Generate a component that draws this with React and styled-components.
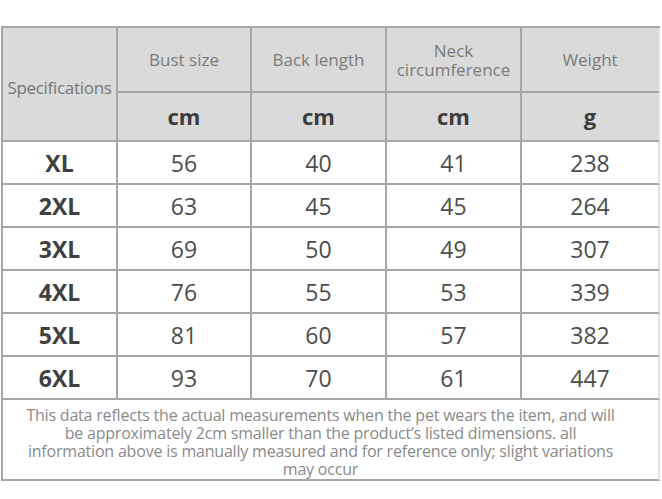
import React from "react";
import styled, { createGlobalStyle } from "styled-components";

const GlobalStyle = createGlobalStyle`
  html, body {
    margin: 0;
    padding: 0;
    background: #ffffff;
  }
  body {
    font-family: "Open Sans", "Noto Sans", sans-serif;
  }
`;

const Page = styled.div`
  width: 662px;
  height: 499px;
  padding-top: 26px;
  box-sizing: border-box;
  overflow: hidden;
`;

const Chart = styled.div`
  margin-left: 1px;
  width: 659px;
  box-sizing: border-box;
  display: grid;
  grid-template-columns: 115px 134px 135px 135px 138px;
  grid-template-rows: 65px 49px repeat(6, 43px) 81px;
  border-top: 2px solid #a6a6a6;
  border-left: 2px solid #a6a6a6;
`;

const Cell = styled.div`
  box-sizing: border-box;
  display: flex;
  align-items: center;
  justify-content: center;
  text-align: center;
  border-right: 2px solid ${({ $last }) => ($last ? "#e2e2e2" : "#a6a6a6")};
  border-bottom: 2px solid #a6a6a6;
  background: ${({ $head }) => ($head ? "#dadada" : "#ffffff")};
`;

const SpecCell = styled(Cell)`
  grid-row: span 2;
  padding-top: 7px;
  font-size: 17px;
  color: #767676;
  letter-spacing: -0.3px;
`;

const Label = styled(Cell)`
  font-size: 17px;
  line-height: 19px;
  color: #7a7a7a;
  white-space: pre-line;
`;

const Unit = styled(Cell)`
  font-size: 22px;
  font-weight: 700;
  color: #3c3c3c;
  padding-bottom: 2px;
`;

const Size = styled(Cell)`
  font-size: 23px;
  font-weight: 700;
  color: #404040;
`;

const Value = styled(Cell)`
  font-size: 23px;
  color: #4d4d4d;
`;

const Note = styled(Cell)`
  grid-column: 1 / -1;
  padding: 4px 20px 0 0;
  font-size: 16px;
  line-height: 18px;
  color: #8a8a8a;
  letter-spacing: -0.2px;
  white-space: nowrap;
`;

const labels = ["Bust size", "Back length", "Neck\ncircumference", "Weight"];
const units = ["cm", "cm", "cm", "g"];

const rows = [
  ["XL", 56, 40, 41, 238],
  ["2XL", 63, 45, 45, 264],
  ["3XL", 69, 50, 49, 307],
  ["4XL", 76, 55, 53, 339],
  ["5XL", 81, 60, 57, 382],
  ["6XL", 93, 70, 61, 447],
];

const note = [
  "This data reflects the actual measurements when the pet wears the item, and will",
  "be approximately 2cm smaller than the product’s listed dimensions. all",
  "information above is manually measured and for reference only; slight variations",
  "may occur",
];

export default function App() {
  return (
    <Page>
      <GlobalStyle />
      <Chart>
        <SpecCell $head>Specifications</SpecCell>
        {labels.map((l, i) => (
          <Label key={l} $head $last={i === labels.length - 1}>
            {l}
          </Label>
        ))}
        {units.map((u, i) => (
          <Unit key={i} $head $last={i === units.length - 1}>
            {u}
          </Unit>
        ))}
        {rows.map(([size, ...vals]) => (
          <React.Fragment key={size}>
            <Size>{size}</Size>
            {vals.map((v, i) => (
              <Value key={i} $last={i === vals.length - 1}>
                {v}
              </Value>
            ))}
          </React.Fragment>
        ))}
        <Note $last>
          <div>
            {note.map((line, i) => (
              <React.Fragment key={i}>
                {line}
                {i < note.length - 1 && <br />}
              </React.Fragment>
            ))}
          </div>
        </Note>
      </Chart>
    </Page>
  );
}
